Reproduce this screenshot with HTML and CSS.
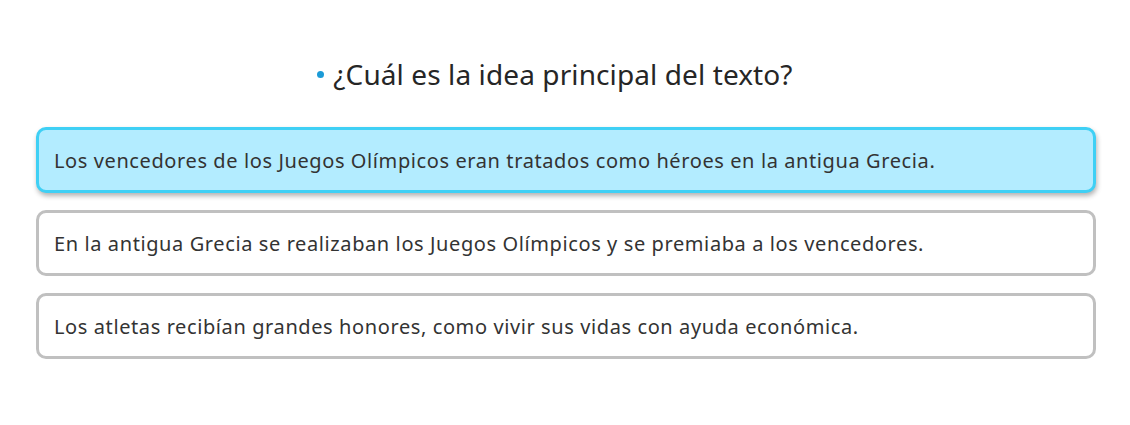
FILE: index.html
```html
<!DOCTYPE html>
<html lang="es">
<head>
<meta charset="utf-8">
<link rel="stylesheet" href="styles.css">
</head>
<body>
<main class="quiz">
  <h2 class="question"><span class="dot"></span>¿Cuál es la idea principal del texto?</h2>
  <ul class="options">
    <li class="option selected">Los vencedores de los Juegos Olímpicos eran tratados como héroes en la antigua Grecia.</li>
    <li class="option">En la antigua Grecia se realizaban los Juegos Olímpicos y se premiaba a los vencedores.</li>
    <li class="option">Los atletas recibían grandes honores, como vivir sus vidas con ayuda económica.</li>
  </ul>
</main>
</body>
</html>
```
FILE: styles.css
```css
html, body {
  margin: 0;
  padding: 0;
  background: #ffffff;
}
body {
  font-family: "Noto Sans", "Open Sans", sans-serif;
  color: #333333;
}
.quiz {
  padding: 56px 34px 0 36px;
}
.question {
  margin: 0 0 35px;
  padding-right: 22px;
  text-align: center;
  font-weight: 400;
  font-size: 28px;
  letter-spacing: 0.1px;
  line-height: 36px;
  color: #262626;
  display: flex;
  justify-content: center;
  align-items: center;
  gap: 9px;
}
.dot {
  width: 7px;
  height: 7px;
  border-radius: 50%;
  background: #1b9bd7;
}
.options {
  list-style: none;
  margin: 0;
  padding: 0;
  display: flex;
  flex-direction: column;
  gap: 17px;
}
.option {
  box-sizing: border-box;
  height: 66px;
  display: flex;
  align-items: center;
  padding: 0 15px;
  border: 3px solid #c0c0c0;
  border-radius: 10px;
  font-size: 20px;
  letter-spacing: 0.6px;
  color: #333333;
}
.option.selected {
  background: #b3ecff;
  border-color: #3fd0f5;
  box-shadow: 1px 3px 5px rgba(0, 0, 0, 0.3);
}
```
